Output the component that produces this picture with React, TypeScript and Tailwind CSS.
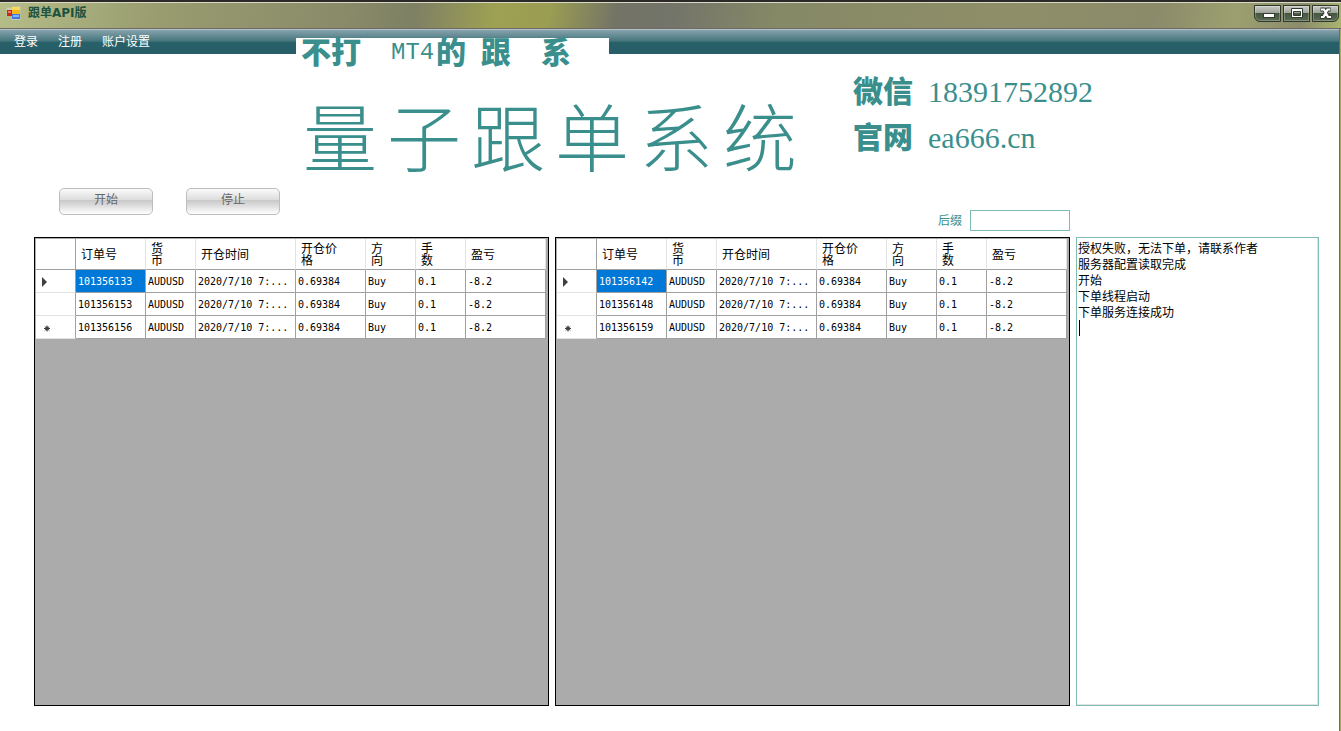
import React from 'react';

type Order = { id: string; symbol: string; time: string; price: string; side: string; lots: string; profit: string };

const makeOrder = (id: string): Order => ({
  id,
  symbol: 'AUDUSD',
  time: '2020/7/10 7:...',
  price: '0.69384',
  side: 'Buy',
  lots: '0.1',
  profit: '-8.2',
});

const sourceOrders = ['101356133', '101356153', '101356156'].map(makeOrder);
const copiedOrders = ['101356142', '101356148', '101356159'].map(makeOrder);

const headers = ['订单号', '货\n币', '开仓时间', '开仓价\n格', '方\n向', '手\n数', '盈亏'];

const logText = [
  '授权失败\uff0c无法下单\uff0c请联系作者',
  '服务器配置读取完成',
  '开始',
  '下单线程启动',
  '下单服务连接成功',
  '',
].join('\n');

const RowMarker: React.FC<{ index: number; last: boolean }> = ({ index, last }) => {
  if (index === 0) {
    return (
      <svg className="ml-1.5 w-2 h-3" viewBox="0 0 8 12" fill="#404040">
        <path d="M0 1v10l5-5z" />
      </svg>
    );
  }
  if (last) {
    return (
      <svg className="ml-2 w-2 h-3" viewBox="0 0 8 12" fill="#404040" stroke="#404040">
        <circle cx="3" cy="6.500" r="1.500" />
        <path d="M3 3.500v6M0 6.500h6M1 4.500l4 4M5 4.500l-4 4" />
      </svg>
    );
  }
  return null;
};

const OrderGrid: React.FC<{ label: string; orders: Order[] }> = ({ label, orders }) => (
  <div className="border border-black bg-[#ababab] pl-px pr-0.5 pt-px">
    <table aria-label={label} className="w-full table-fixed border-separate border-spacing-0 bg-white text-black">
      <colgroup>
        <col className="w-10" />
        <col className="w-[70px]" />
        <col className="w-[50px]" />
        <col className="w-[100px]" />
        <col className="w-[70px]" />
        <col className="w-[50px]" />
        <col className="w-[50px]" />
        <col className="w-20" />
      </colgroup>
      <thead>
        <tr className="h-[31px]">
          <td className="border-r border-b border-r-[#a0a0a0] border-b-[#a0a0a0]" />
          {headers.map((h) => (
            <th
              key={h}
              className="border-r border-b border-r-[#e3e3e3] border-b-[#a0a0a0] p-0 pt-0.5 pl-[5px] text-left text-xs leading-3 font-normal whitespace-pre-line"
            >
              {h}
            </th>
          ))}
        </tr>
      </thead>
      <tbody className="font-['DejaVu_Sans_Mono',monospace] text-[10px] leading-3">
        {orders.map((o, i) => (
          <tr key={o.id} className="h-[23px]">
            <td className="border-r border-b border-r-[#a0a0a0] border-b-[#e3e3e3] p-0 pt-0.5">
              <RowMarker index={i} last={i === orders.length - 1} />
            </td>
            {Object.values(o).map((value, c) => (
              <td
                key={c}
                className={`border-r border-b border-[#a0a0a0] p-0 pt-0.5 pl-0.5 whitespace-nowrap overflow-hidden ${
                  i === 0 && c === 0 ? 'bg-[#0078d7] text-white' : ''
                }`}
              >
                {value}
              </td>
            ))}
          </tr>
        ))}
      </tbody>
    </table>
  </div>
);

const captionClass =
  'w-[27px] h-[17px] border border-[#2f382b] shadow-[inset_0_0_0_1px_#ffffff40] bg-[linear-gradient(#c9cbc6_0%,#9ea39a_45%,#465640_50%,#5b6c52_100%)]';

const TitleBar: React.FC = () => (
  <header className="h-[29px] flex items-start border-t-2 border-b border-t-[#2b2a28] border-b-[#6f6a68] bg-[linear-gradient(100deg,#b5bd88_0%,#989c6f_12%,#8a8c69_25%,#7e8064_31%,#9ea152_37%,#9a9d52_41%,#737466_46%,#73746a_50%,#868966_58%,#8e8f68_75%,#8b8a6a_86%,#9ca06f_92%,#8b8c6c_97%,#a9b56c_100%)]">
    <div className="flex-1 h-[26px] flex items-start border-t border-[#d9d9c6] pl-1.5 pr-0.5">
      <svg className="mt-[3px] w-4 h-4" viewBox="0 0 16 16">
        <path d="M.5 1.500h6v-1h8v13.500h-9v-4h-5z" fill="#d8d8d0" opacity=".6" />
        <rect x="6" y="1" width="8" height="7" fill="#f4b81c" />
        <rect x="6" y="1" width="8" height="3" fill="#fbd75a" />
        <rect x="1" y="4" width="5" height="6" fill="#c8281c" />
        <rect x="2" y="5" width="3" height="2" fill="#ef7a66" />
        <rect x="6" y="8" width="8" height="5" fill="#3c78e0" />
        <rect x="7" y="9" width="6" height="2" fill="#86b2f6" />
      </svg>
      <h1 className="ml-1.5 flex-1 pt-0.5 font-['DejaVu_Sans','Noto_Sans_CJK_SC',sans-serif] text-xs leading-4 font-bold text-[#1d5240]">
        跟单API版
      </h1>
      <div className="mt-0.5 flex gap-0.5">
        <button aria-label="最小化" className={`${captionClass} rounded-bl-md`}>
          <svg className="w-full h-full" viewBox="0 0 25 15">
            <rect x="8.500" y="7.500" width="11" height="4" fill="#fff" stroke="#333a30" />
          </svg>
        </button>
        <button aria-label="最大化" className={captionClass}>
          <svg className="w-full h-full" viewBox="0 0 25 15">
            <path
              d="M7.500 2.500h11v9h-11zM9.500 5.500v4h7v-4z"
              fill="#fff"
              fillRule="evenodd"
              stroke="#333a30"
            />
          </svg>
        </button>
        <button aria-label="关闭" className={`${captionClass} rounded-br-md`}>
          <svg className="w-full h-full" viewBox="0 0 25 15" fill="none">
            <path d="M7.500 3.500h3.500l4 7.500h3.500M17.500 3.500h-3l-4 7.500h-3" stroke="#333a30" strokeWidth="4" />
            <path d="M8 3.500h3l4 7.500h3M17 3.500h-2.500l-4 7.500h-2.500" stroke="#fff" strokeWidth="2.200" />
          </svg>
        </button>
      </div>
    </div>
  </header>
);

const actionClass =
  'w-[94px] h-[27px] rounded-[5px] border border-[#bdbdbd] bg-[linear-gradient(#fafafa_0%,#dedede_42%,#c9c9c9_46%,#d6d6d6_60%,#ffffff_100%)] text-xs leading-none text-[#666] pb-1';

const App: React.FC = () => (
  <div className="min-h-screen flex flex-col bg-white font-['Liberation_Sans','Noto_Sans_CJK_SC',sans-serif]">
    <TitleBar />
    <div className="flex-1 flex flex-col bg-[#a9ad68] pr-px">
      <div className="flex-1 flex flex-col border-r border-[#6b6b66] bg-white">
        <nav className="h-[25px] flex items-center gap-5 border-t border-[#b4c0c8] bg-[linear-gradient(#86a3ad_0%,#45757c_46%,#276069_52%,#275e67_100%)] pl-3.5 text-xs leading-none text-white">
          <a href="#login">登录</a>
          <a href="#register">注册</a>
          <a href="#account">账户设置</a>
        </nav>

        {/* Slogan, product name and contact lines */}
        <div className="flex items-start pl-[296px] text-[#3a8f8d]">
          <div className="relative -mt-4">
            <p className="w-[313px] flex bg-white pl-[5px] text-[30px] leading-[30px] font-black">
              <span>不打</span>
              <span className="ml-[30px] w-[45px] font-['Liberation_Mono',monospace] text-2xl leading-[30px] font-normal">MT4</span>
              <span>的</span>
              <span className="ml-[15px]">跟</span>
              <span className="ml-[30px]">系</span>
            </p>
            <h2 className="mt-9 flex gap-2.5 pl-[7px] text-[74px] leading-[74px] font-light">
              {[...'量子跟单系统'].map((ch) => (
                <span key={ch}>{ch}</span>
              ))}
            </h2>
          </div>
          <dl className="ml-14 mt-[15px] grid grid-cols-[auto_auto] gap-x-[15px] text-[30px] leading-[46px]">
            <dt className="font-black">微信</dt>
            <dd className="font-['Liberation_Serif',serif]">18391752892</dd>
            <dt className="font-black">官网</dt>
            <dd className="font-['Liberation_Serif',serif]">ea666.cn</dd>
          </dl>
        </div>

        <div className="grid grid-cols-[515fr_515fr_243fr] items-start gap-1.5 pt-2.5 pb-1.5 pl-[34px] pr-5">
          <div className="flex gap-[33px] pl-[25px]">
            <button className={actionClass}>开始</button>
            <button className={actionClass}>停止</button>
          </div>
          <div className="flex items-center justify-end gap-2 pt-[22px] text-xs leading-none text-[#3a8f8d]">
            <label htmlFor="suffix">后缀</label>
            <input id="suffix" className="w-[100px] h-[21px] border border-[#7fbcb5] bg-white px-1 outline-none" />
          </div>
        </div>

        <main className="flex-1 grid grid-cols-[515fr_515fr_243fr] gap-1.5 pb-[25px] pl-[34px] pr-5">
          <OrderGrid label="主账户订单" orders={sourceOrders} />
          <OrderGrid label="跟单账户订单" orders={copiedOrders} />
          <div className="relative flex">
            <textarea
              aria-label="日志"
              defaultValue={logText}
              className="flex-1 min-w-0 resize-none border border-[#7fbcb5] bg-white pt-[3px] pl-px text-xs leading-4 text-black outline-none shadow-[inset_-1px_-1px_0_#e3e3e3]"
            />
            {/* Text cursor on the empty last line */}
            <span className="absolute left-[3px] top-[83px] w-px h-4 bg-black" />
          </div>
        </main>
      </div>
    </div>
  </div>
);

export default App;
